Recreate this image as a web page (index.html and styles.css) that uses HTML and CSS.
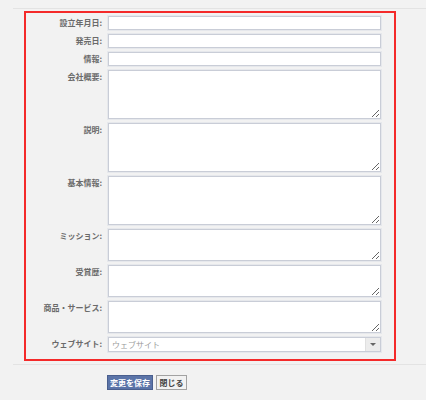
FILE: index.html
```html
<!DOCTYPE html>
<html lang="ja">
<head>
<meta charset="utf-8">
<link rel="stylesheet" href="styles.css">
</head>
<body>
<div class="page">
  <div class="topline"></div>
  <div class="frame">
    <div class="form">
      <label class="lbl">設立年月日:</label><input class="field" type="text">
      <label class="lbl">発売日:</label><input class="field" type="text">
      <label class="lbl">情報:</label><input class="field" type="text">
      <label class="lbl">会社概要:</label><textarea class="area big"></textarea>
      <label class="lbl">説明:</label><textarea class="area big"></textarea>
      <label class="lbl">基本情報:</label><textarea class="area big"></textarea>
      <label class="lbl">ミッション:</label><textarea class="area small"></textarea>
      <label class="lbl">受賞歴:</label><textarea class="area small"></textarea>
      <label class="lbl">商品・サービス:</label><textarea class="area small"></textarea>
      <label class="lbl">ウェブサイト:</label>
      <div class="select"><span class="placeholder">ウェブサイト</span><span class="arrow"></span></div>
    </div>
  </div>
  <div class="bottomline"></div>
  <div class="buttons">
    <button class="btn primary">変更を保存</button>
    <button class="btn plain">閉じる</button>
  </div>
</div>
</body>
</html>
```

FILE: styles.css
```css
html, body {
  margin: 0;
  padding: 0;
  background: #f2f2f2;
  font-family: "Noto Sans CJK JP", "Noto Sans", sans-serif;
}
.page {
  width: 426px;
  height: 400px;
  padding-top: 8px;
  box-sizing: border-box;
}
.topline {
  margin-left: 13px;
  border-top: 1px solid #e3e3e3;
}
.frame {
  margin: 2px 0 0 24px;
  width: 372px;
  box-sizing: border-box;
  border: 2px solid #f42a2a;
  padding: 3px 13px 7px 0;
}
.form {
  display: grid;
  grid-template-columns: 76px 273px;
  column-gap: 6px;
  row-gap: 4px;
}
.lbl {
  font-size: 8px;
  line-height: 14px;
  font-weight: bold;
  color: #6a6a6a;
  text-align: right;
  white-space: nowrap;
}
.field, .area, .select {
  box-sizing: border-box;
  width: 273px;
  margin: 0;
  border: 1px solid #c9cdd7;
  box-shadow: 0 0 0 1px #e6e8ec;
  background: #fff;
  outline: none;
  font-family: inherit;
  font-size: 8px;
}
.field { height: 14px; padding: 0 3px; }
.area { padding: 2px 3px; resize: both; display: block; }
.area.big { height: 49px; }
.area.small { height: 32px; }
.select {
  height: 15px;
  display: flex;
  align-items: center;
  justify-content: space-between;
}
.placeholder {
  color: #9a9a9a;
  font-size: 8px;
  line-height: 13px;
  padding-left: 3px;
}
.arrow {
  width: 14px;
  height: 13px;
  background: #ececec;
  border-left: 1px solid #e0e0e0;
  display: flex;
  align-items: center;
  justify-content: center;
}
.arrow::after {
  content: "";
  border-left: 3px solid transparent;
  border-right: 3px solid transparent;
  border-top: 3px solid #666;
}
.bottomline {
  margin: 3px 0 0 13px;
  border-top: 1px solid #e3e3e3;
}
.buttons {
  display: flex;
  gap: 3px;
  padding: 10px 0 0 107px;
}
.btn {
  box-sizing: border-box;
  height: 15px;
  margin: 0;
  padding: 0;
  font-family: inherit;
  font-size: 8px;
  font-weight: bold;
  line-height: 13px;
  white-space: nowrap;
  text-align: center;
  cursor: pointer;
}
.btn.primary {
  width: 46px;
  background: #5b74a8;
  border: 1px solid #4a5f8e;
  color: #fff;
}
.btn.plain {
  width: 31px;
  background: #f2f2f2;
  border: 1px solid #a2a2a2;
  color: #444;
}
```
